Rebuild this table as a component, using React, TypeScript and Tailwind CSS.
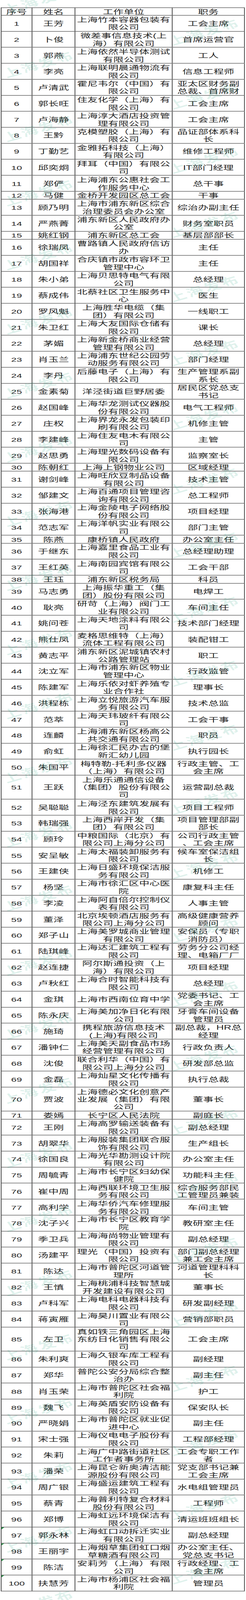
import { useEffect, useState } from "react";

type Row = [string, string, string, string];

// "|" marks the line breaks as they appear in the sheet
const ROWS: Row[] = [
  ["1", "王芳", "上海竹本容器包装有|限公司", "工会主席"],
  ["2", "卜俊", "微差事信息技术(上|海）有限公司", "首席运营官"],
  ["3", "郭燕", "上海依然半导体测试|有限公司", "工人"],
  ["4", "李亮", "上海联明晨通物流有|限公司", "信息工程师"],
  ["5", "卢清武", "霍尼韦尔（中国）有|限公司", "亚太区财务副|总裁、首席财"],
  ["6", "郭长旺", "住友化学（上海）有|限公司", "工会主席"],
  ["7", "卢海静", "上海淳大酒店投资管|理有限公司", "工会主席"],
  ["8", "王黔", "克模塑胶（上海）有|限公司", "品证部体系科|长"],
  ["9", "丁勤艺", "金雅拓科技（上海）|有限公司", "维修工程师"],
  ["10", "邱奕炯", "拜耳（中国）有限公|司", "IT部门经理"],
  ["11", "郑俨", "上海浦东公惠社会工|作服务中心", "总干事"],
  ["12", "马健", "金桥开发园区总工会", "干事"],
  ["13", "顾乃明", "上海市浦东新区综合|治理委员会办公室", "综治办副主任"],
  ["14", "严燕菁", "浦东新区人民政府办|公室", "财务室职员"],
  ["15", "姚红钢", "浦东新区总工会", "基层部部长"],
  ["16", "徐瑞凤", "曹路镇人民政府信访|办", "主任"],
  ["17", "胡国祥", "合庆镇市政市容环卫|管理中心", "主任"],
  ["18", "朱小弟", "上海贝思特电气有限|公司", "总经理"],
  ["19", "蔡成伟", "北蔡社区卫生服务中|心", "医生"],
  ["20", "罗风魁", "上海胜华电缆（集|团）有限公司", "一线职工"],
  ["21", "朱卫红", "上海大友国际仓储有|限公司", "课长"],
  ["22", "茅媚", "上海新金桥商业经营|管理有限公司", "总经理"],
  ["23", "肖玉兰", "上海浦东世纪公园劳|动服务有限公司", "部门经理"],
  ["24", "李丹", "后藤电子（上海）有|限公司", "生产管理系副|系长"],
  ["25", "金素菊", "洋泾街道巨野居委", "居民区党总支|书记"],
  ["26", "赵国峰", "上海华龙测试仪器股|份有限公司", "电气工程师"],
  ["27", "庄权", "上海界龙永发包装印|刷有限公司", "机修主管"],
  ["28", "李建峰", "上海住友电木有限公|司", "主管"],
  ["29", "赵思勇", "上海理光数码设备有|限公司", "监察室长"],
  ["30", "陈朝红", "上海上钢物业公司", "区域经理"],
  ["31", "谢剑峰", "上海旺欣豆制品设备|有限公司", "技术主管"],
  ["32", "邹建文", "上海百通项目管理咨|询有限公司", "总工程师"],
  ["33", "张海港", "上海金陵电子网络股|份有限公司", "项目经理"],
  ["34", "范志军", "上海洋帆实业有限公|司", "部门主管"],
  ["35", "陈燕", "康桥镇人民政府", "办公室主任"],
  ["36", "于继东", "上海嘉里食品工业有|限公司", "总经理助理"],
  ["37", "王红英", "上海南园宾馆有限公|司", "工会干部"],
  ["38", "王珏", "浦东新区税务局", "科员"],
  ["39", "马志勇", "上海振华重工（集|团）股份有限公司", "电焊工"],
  ["40", "耿亮", "研苛（上海）阀门工|业有限公司", "车间主任"],
  ["41", "姚问苍", "上海天地涂料有限公|司", "技术部门经理"],
  ["42", "熊仕凤", "麦格思维特（上海）|流体工程有限公司", "装配钳工"],
  ["43", "黄志平", "浦东新区泥城镇农村|公路管理站", "职工"],
  ["44", "沈立军", "上海市浦东新区物业|管理中心", "行政监管"],
  ["45", "陈建军", "上海乐依对虾养殖专|业合作社", "理事长"],
  ["46", "洪程栋", "上海立悦旅游汽车服|务有限公司", "技术总监"],
  ["47", "范萃", "上海天玮玻纤有限公|司", "工会干事"],
  ["48", "连麟", "上海浦东新区杨高公|共交通有限公司", "职员"],
  ["49", "俞虹", "上海徐汇民办吉的堡|新汇幼儿园", "执行园长"],
  ["50", "朱国平", "梅特勒-托利多仪器|（上海）有限公司", "行政主管、工|会主席"],
  ["51", "王跃", "上海乐通通信设备|（集团）股份有限公|司", "运营副总裁"],
  ["52", "吴聪聪", "上海泾东建筑发展有|限公司", "项目工程师"],
  ["53", "韩瑞强", "上海西岸开发（集|团）有限公司", "项目管理部副|部长"],
  ["54", "顾玲", "中粮国际（北京）有|限公司上海分公司", "公司行政主管|、工会主席"],
  ["55", "安呈敏", "上海太福装卸服务有|限公司", "候车室保洁组|长"],
  ["56", "王建侠", "上海日盛环境保洁服|务有限公司", "机修工"],
  ["57", "杨坚", "上海市徐汇区中心医|院", "康复科主任"],
  ["58", "李凌", "上海阿自倍尔控制仪|表有限公司", "人事主管"],
  ["59", "董泽", "北京埃顿酒店服务有|限公司上海分公司", "高级健康营养|顾问"],
  ["60", "郑子山", "上海美罗城商业管理|有限公司", "安保员（专职|消防员）"],
  ["61", "陆琪峰", "上海达汇建筑工程有|限公司", "劳务分公司经|理、电箱厂厂"],
  ["62", "赵连捷", "阿尔斯通投资（上|海）有限公司", "项目经理"],
  ["63", "卢秋红", "上海合时智能科技有|限公司", "总经理"],
  ["64", "金琪", "上海市西南位育中学", "党委书记、工|会主席"],
  ["65", "陈永庆", "上海美加净日化有限|公司", "牙膏车间设备|管理员"],
  ["66", "施琦", "携程旅游信息技术|(上海)有限公司", "副总裁，HR总|经理"],
  ["67", "潘钟仁", "上海美天副食品市场|经营管理有限公司", "行政负责人"],
  ["68", "沈俊", "联合利华（中国）有|限公司上海分公司", "研发部总监"],
  ["69", "金磊", "上海灿星文化传播有|限公司", "执行总裁"],
  ["70", "贾波", "上海德必文化创意产|业发展（集团）有限|公司", "董事长"],
  ["71", "娄嫣", "长宁区人民法院", "副庭长"],
  ["72", "王刚", "上海高罗输送装备有|限公司", "副总经理"],
  ["73", "胡翠华", "上海服装集团联合服|饰有限公司", "生产组长"],
  ["74", "徐国良", "上海光华勘测设计院|有限公司", "办公室主任"],
  ["75", "周毓青", "上海市长宁区妇幼保|健院", "功能科主任"],
  ["76", "崔中周", "上海西联环境卫生服|务有限公司", "综合服务部民|工管理员兼装"],
  ["77", "高利学", "上海华侨汽车修理服|务有限公司", "车间主管"],
  ["78", "沈子兴", "上海市长宁区教育学|院", "教研室主任"],
  ["79", "季卫兵", "上海海尚物业管理有|限公司", "副总经理"],
  ["80", "汤建平", "理光（中国）投资有|限公司", "部门副总经理|兼工会主席"],
  ["81", "陈达", "上海市普陀区河道管|理所", "河道管理科科|长"],
  ["82", "王慎", "上海桃浦科技智慧城|开发建设有限公司", "董事长"],
  ["83", "卢科军", "上海电科电器科技有|限公司", "研发副经理"],
  ["84", "蒋寅雁", "上海昊川置业有限公|司", "营销部职员"],
  ["85", "左卫", "真如铁三角园区上海|东纺日化销售有限公|司", "工会主席"],
  ["86", "朱利爽", "上海久银车库工程有|限公司", "副经理"],
  ["87", "郑华", "普陀公安分局综合整|治办", "副主任"],
  ["88", "肖玉荣", "上海市普陀区社会福|利院", "护工"],
  ["89", "魏飞", "上海英盾安防设备有|限公司", "保安队长"],
  ["90", "严晓娟", "上海市普陀区就业促|进中心", "副主任"],
  ["91", "宋士强", "上海仪电电子股份有|限公司", "工程部经理"],
  ["92", "朱莉", "上海广中路街道社区|工作者事务所", "工会专职工作|者"],
  ["93", "潘荣", "上海昆仑新奥清洁能|源股份有限公司", "党支部书记兼|工会主席"],
  ["94", "周广银", "上海盛运建筑工程有|限公司", "水电组管理员"],
  ["95", "蔡青", "上海普利特复合材料|股份有限公司", "工程师"],
  ["96", "郑博", "上海虹远环境保洁有|限公司", "清运班班组长"],
  ["97", "郭永林", "上海虹口动拆迁实业|有限公司", "副总经理"],
  ["98", "王丽宇", "上海烟草集团虹口烟|草糖酒有限公司", "办公室主任、|党总支书记"],
  ["99", "陈洁", "安莉芳（上海）有限|公司", "行政经理、工|会主席"],
  ["100", "扶慧芳", "上海市杨浦区社会福|利院", "管理员"],
];

const PAGE_H = 6673;

// the sheet is one long picture; if the window comes up shorter than the
// sheet, squeeze it vertically so the whole list still fits the frame
function readScale() {
  if (typeof window === "undefined" || !window.innerHeight) return 1;
  return Math.min(1, window.innerHeight / PAGE_H);
}

function usePageScale() {
  const [s, setS] = useState(readScale);
  useEffect(() => {
    const onResize = () => setS(readScale());
    onResize();
    window.addEventListener("resize", onResize);
    return () => window.removeEventListener("resize", onResize);
  }, []);
  return s;
}

function rowHeight(lines: number) {
  if (lines === 1) return "h-[33.36px]";
  if (lines === 3) return "h-[100.08px]";
  return "h-[66.72px]";
}

function Cell({
  text,
  width,
  tall = false,
  small = false,
  flag = false,
}: {
  text: string;
  width: string;
  tall?: boolean;
  small?: boolean;
  flag?: boolean;
}) {
  return (
    <div
      className={`relative flex h-full shrink-0 flex-col items-center justify-center overflow-hidden border-r-2 border-[#4a4a4a] pt-[2px] ${width} ${
        small ? "text-[25px]" : "text-[26.5px]"
      }`}
    >
      {flag && (
        <span className="absolute left-0 top-0 h-0 w-0 border-r-[7px] border-t-[8px] border-r-transparent border-t-[#1f8a3e]" />
      )}
      {text.split("|").map((line, i) => (
        <div
          key={i}
          className={`whitespace-nowrap text-center ${tall ? "h-[31px] leading-[31px]" : "h-[32px] leading-[32px]"}`}
        >
          {line}
        </div>
      ))}
    </div>
  );
}

function Watermark({ x, y }: { x: number; y: number }) {
  return (
    <div
      className="pointer-events-none absolute -translate-x-1/2 -translate-y-1/2 -rotate-25 whitespace-nowrap text-[44px] font-bold leading-none tracking-[5px] text-[rgba(0,150,110,0.15)]"
      style={{ left: x, top: y }}
    >
      上海发布
    </div>
  );
}

export default function App() {
  const scale = usePageScale();

  const marks: { x: number; y: number }[] = [];
  for (let k = -1; k <= 24; k++) {
    marks.push({ x: 100, y: 270 + 267.4 * k });
    if (k >= 0) marks.push({ x: 524, y: 135 + 267.4 * k });
  }

  return (
    <div className="w-[630px] overflow-hidden bg-white" style={{ height: PAGE_H * scale }}>
      <div
        className="relative h-[6673px] w-[630px] origin-top overflow-hidden bg-white pt-[31px] text-[#222]"
        style={{
          transform: `scaleY(${scale})`,
          fontFamily: '"Liberation Sans", "Noto Sans CJK SC", sans-serif',
        }}
      >
        <div className="ml-[2px] w-[625px] border-l-2 border-t-2 border-[#4a4a4a]">
          <div className="flex h-[32px] border-b-2 border-[#4a4a4a]">
            <Cell text="序号" width="w-[79px]" />
            <Cell text="姓名" width="w-[110px]" />
            <Cell text="工作单位" width="w-[249px]" />
            <Cell text="职务" width="w-[185px]" />
          </div>

          {ROWS.map(([no, name, unit, post]) => {
            const lines = Math.max(unit.split("|").length, post.split("|").length);
            const tall = lines === 3;
            const n = Number(no);
            return (
              <div key={no} className={`flex border-b-2 border-[#4a4a4a] ${rowHeight(lines)}`}>
                <Cell text={no} width="w-[79px]" tall={tall} small flag={n >= 97} />
                <Cell text={name} width="w-[110px]" tall={tall} />
                <Cell text={unit} width="w-[249px]" tall={tall} />
                <Cell text={post} width="w-[185px]" tall={tall} />
              </div>
            );
          })}
        </div>

        {marks.map((m, i) => (
          <Watermark key={i} x={m.x} y={m.y} />
        ))}
      </div>
    </div>
  );
}
